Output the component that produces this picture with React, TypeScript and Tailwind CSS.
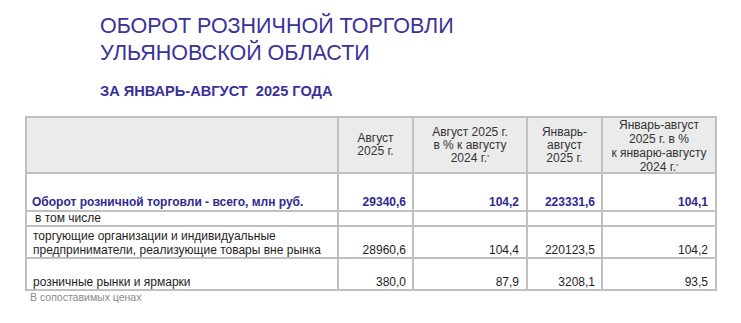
import React from 'react'

const rows = [
  { label: 'торгующие организации и индивидуальные предприниматели, реализующие товары вне рынка', v: ['28960,6', '104,4', '220123,5', '104,2'], h: 'h-[32px]' },
  { label: 'розничные рынки и ярмарки', v: ['380,0', '87,9', '3208,1', '93,5'], h: 'h-[32px]' },
]

const cell = 'border-2 border-[#c0c0c0] p-0'

export default function App() {
  return (
    <div className="w-[741px] h-[323px] bg-white font-['Liberation_Sans',Arial,sans-serif] overflow-hidden">
      <div className="pl-[100px] pt-[13px] text-[#3a3199]">
        <h1 className="text-[21.5px] leading-[26.5px] font-normal">
          ОБОРОТ РОЗНИЧНОЙ ТОРГОВЛИ
          <br />
          УЛЬЯНОВСКОЙ ОБЛАСТИ
        </h1>
        <h2 className="mt-[17px] text-[14.6px] leading-[16px] font-bold whitespace-pre">ЗА ЯНВАРЬ-АВГУСТ  2025 ГОДА</h2>
      </div>

      <table className="mt-[17px] ml-[25px] border-collapse table-fixed text-[12px] leading-[14px] text-[#1e1e1e]">
        <colgroup>
          <col className="w-[312px]" />
          <col className="w-[75px]" />
          <col className="w-[114px]" />
          <col className="w-[75px]" />
          <col className="w-[114px]" />
        </colgroup>
        <thead>
          <tr className="h-[56px] bg-[#ebebeb] text-[#333] text-center align-middle leading-[13px]">
            <th className={cell}></th>
            <th className={`${cell} font-normal`}>Август<br />2025 г.</th>
            <th className={`${cell} font-normal`}>Август 2025 г.<br />в % к августу<br />2024 г.<sup className="text-[6px]">*</sup></th>
            <th className={`${cell} font-normal`}>Январь-<br />август<br />2025 г.</th>
            <th className={`${cell} font-normal`}>
              <div className="h-[52px] flex flex-col justify-center leading-[14px] pt-[2px]">
                <span>Январь-август</span>
                <span>2025 г. в %</span>
                <span>к январю-августу</span>
                <span>2024 г.<sup className="text-[6px]">*</sup></span>
              </div>
            </th>
          </tr>
        </thead>
        <tbody>
          <tr className="h-[38px] align-bottom font-bold text-[#2f2a8f]">
            <td className={`${cell} pl-[5px] pb-[1px]`}>Оборот розничной торговли - всего, млн руб.</td>
            <td className={`${cell} text-right pr-[6px] pb-[1px]`}>29340,6</td>
            <td className={`${cell} text-right pr-[7px] pb-[1px]`}>104,2</td>
            <td className={`${cell} text-right pr-[6px] pb-[1px]`}>223331,6</td>
            <td className={`${cell} text-right pr-[7px] pb-[1px]`}>104,1</td>
          </tr>
          <tr className="h-[15px] align-bottom">
            <td className={`${cell} pl-[8px] leading-[13px]`}>в том числе</td>
            <td className={cell}></td>
            <td className={cell}></td>
            <td className={cell}></td>
            <td className={cell}></td>
          </tr>
          {rows.map((r) => (
            <tr key={r.label} className={`${r.h} align-bottom`}>
              <td className={`${cell} pl-[6px] pr-[4px]`}>{r.label}</td>
              {r.v.map((v, i) => (
                <td key={i} className={`${cell} text-right ${i % 2 === 0 ? 'pr-[6px]' : 'pr-[7px]'}`}>{v}</td>
              ))}
            </tr>
          ))}
        </tbody>
      </table>
      <div className="ml-[30px] text-[10.5px] leading-[12px] text-[#8a8a8a]">В сопоставимых ценах</div>
    </div>
  )
}
